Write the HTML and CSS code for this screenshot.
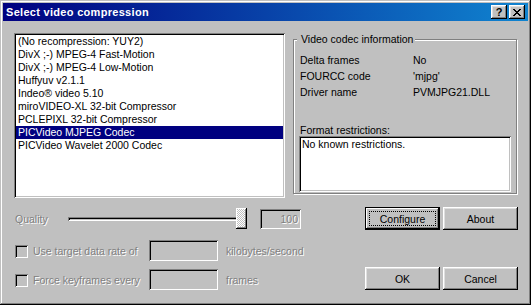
FILE: index.html
```html
<!DOCTYPE html>
<html lang="en">
<head>
    <meta charset="UTF-8">
    <title>Select video compression</title>
    <link rel="stylesheet" href="styles.css">
</head>
<body>
    <div class="window">
        <div class="titlebar">
            <span class="title">Select video compression</span>
            <div class="caption-buttons">
                <button class="caption-btn">?</button>
                <button class="caption-btn">
                    <svg width="8" height="7" viewBox="0 0 8 7" shape-rendering="crispEdges"><path d="M0 0h2v1H0zM6 0h2v1H6zM1 1h2v1H1zM5 1h2v1H5zM2 2h4v1H2zM3 3h2v1H3zM2 4h4v1H2zM1 5h2v1H1zM5 5h2v1H5zM0 6h2v1H0zM6 6h2v1H6z"/></svg>
                </button>
            </div>
        </div>

        <div class="content">
            <div class="top-row">
                <ul class="listbox">
                    <li>(No recompression: YUY2)</li>
                    <li>DivX ;-) MPEG-4 Fast-Motion</li>
                    <li>DivX ;-) MPEG-4 Low-Motion</li>
                    <li>Huffyuv v2.1.1</li>
                    <li>Indeo® video 5.10</li>
                    <li>miroVIDEO-XL 32-bit Compressor</li>
                    <li>PCLEPIXL 32-bit Compressor</li>
                    <li class="selected">PICVideo MJPEG Codec</li>
                    <li>PICVideo Wavelet 2000 Codec</li>
                </ul>

                <div class="groupbox">
                    <span class="legend">Video codec information</span>
                    <div class="info">
                        <div class="info-row"><span class="info-key">Delta frames</span><span>No</span></div>
                        <div class="info-row"><span class="info-key">FOURCC code</span><span>'mjpg'</span></div>
                        <div class="info-row"><span class="info-key">Driver name</span><span>PVMJPG21.DLL</span></div>
                    </div>
                    <div class="restrict-label">Format restrictions:</div>
                    <div class="restrict-box">No known restrictions.</div>
                </div>
            </div>

            <div class="quality-row">
                <div class="quality">
                    <span class="disabled quality-label">Quality</span>
                    <div class="slider">
                        <div class="track"></div>
                        <div class="thumb"></div>
                    </div>
                    <div class="field quality-field disabled">100</div>
                </div>
                <div class="button-pair">
                    <button class="btn default"><span class="focus">Configure</span></button>
                    <button class="btn">About</button>
                </div>
            </div>

            <div class="bottom-row">
                <div class="options">
                    <div class="option">
                        <span class="checkbox"></span>
                        <span class="disabled option-label">Use target data rate of</span>
                        <span class="field option-field"></span>
                        <span class="disabled unit">kilobytes/second</span>
                    </div>
                    <div class="option">
                        <span class="checkbox"></span>
                        <span class="disabled option-label">Force keyframes every</span>
                        <span class="field option-field"></span>
                        <span class="disabled unit">frames</span>
                    </div>
                </div>
                <div class="button-pair">
                    <button class="btn">OK</button>
                    <button class="btn">Cancel</button>
                </div>
            </div>
        </div>
    </div>
</body>
</html>
```

FILE: styles.css
```css
html, body {
    margin: 0;
    padding: 0;
    background: #c0c0c0;
    color: #000;
    font-family: "Liberation Sans", Arial, sans-serif;
    font-size: 10.5px;
}

.window {
    width: 531px;
    height: 305px;
    box-sizing: border-box;
    padding: 3px;
    background: #c0c0c0;
    box-shadow: inset -1px -1px #000, inset 1px 1px #c0c0c0, inset -2px -2px #808080, inset 2px 2px #fff;
}

.titlebar {
    height: 18px;
    display: flex;
    align-items: center;
    justify-content: space-between;
    padding: 0 3px 0 3px;
    background: linear-gradient(to right, #000080, #1084d0);
}

.title {
    color: #fff;
    font-weight: bold;
    font-size: 11px;
    letter-spacing: 0.3px;
}

.caption-buttons {
    display: flex;
    gap: 2px;
}

.caption-btn {
    width: 16px;
    height: 14px;
    padding: 0;
    border: 0;
    background: #c0c0c0;
    display: flex;
    align-items: center;
    justify-content: center;
    font-family: "Liberation Sans", Arial, sans-serif;
    font-weight: bold;
    font-size: 11px;
    box-shadow: inset -1px -1px #000, inset 1px 1px #fff, inset -2px -2px #808080, inset 2px 2px #dfdfdf;
}

.content {
    padding: 12px 10px 0 11px;
}

/* list + codec info */
.top-row {
    display: flex;
    gap: 8px;
}

.listbox {
    width: 271px;
    height: 165px;
    box-sizing: border-box;
    margin: 0;
    padding: 2px;
    list-style: none;
    background: #fff;
    box-shadow: inset 1px 1px #808080, inset -1px -1px #fff, inset 2px 2px #000, inset -2px -2px #c0c0c0;
}

.listbox li {
    height: 13px;
    line-height: 13px;
    padding-left: 2px;
    white-space: nowrap;
}

.listbox li.selected {
    background: #000080;
    color: #fff;
}

.groupbox {
    width: 224px;
    height: 155px;
    box-sizing: border-box;
    margin-top: 6px;
    padding: 0 5px 0 5px;
    border: 1px solid #808080;
    box-shadow: inset 1px 1px #fff, 1px 1px #fff;
}

.legend {
    display: block;
    width: fit-content;
    margin: -7px 0 0 -2px;
    padding: 0 2px 0 4px;
    line-height: 13px;
    background: #c0c0c0;
}

.info {
    margin-top: 6px;
    padding-left: 1px;
}

.info-row {
    display: flex;
    height: 16px;
    line-height: 16px;
}

.info-key {
    width: 113px;
}

.restrict-label {
    margin-top: 24px;
    padding-left: 1px;
    line-height: 12px;
}

.restrict-box {
    width: 212px;
    height: 56px;
    box-sizing: border-box;
    padding: 2px 3px;
    line-height: 12px;
    background: #fff;
    box-shadow: inset 1px 1px #808080, inset -1px -1px #fff, inset 2px 2px #000, inset -2px -2px #c0c0c0;
}

/* shared controls */
.disabled {
    color: #808080;
    text-shadow: 1px 1px 0 #fff;
}

.field {
    box-sizing: border-box;
    background: #c0c0c0;
    box-shadow: inset 1px 1px #808080, inset -1px -1px #fff, inset 2px 2px #000, inset -2px -2px #c0c0c0;
}

.btn {
    width: 75px;
    height: 23px;
    padding: 0;
    border: 0;
    background: #c0c0c0;
    font-family: "Liberation Sans", Arial, sans-serif;
    font-size: 10.5px;
    color: #000;
    box-shadow: inset -1px -1px #000, inset 1px 1px #fff, inset -2px -2px #808080, inset 2px 2px #dfdfdf;
}

.btn.default {
    display: flex;
    padding: 4px;
    box-shadow: inset 0 0 0 1px #000, inset -2px -2px #000, inset 2px 2px #fff, inset -3px -3px #808080;
}

.focus {
    flex: 1;
    display: flex;
    align-items: center;
    justify-content: center;
    border: 1px dotted #000;
}

.button-pair {
    display: flex;
    gap: 3px;
}

/* quality slider row */
.quality-row {
    margin-top: 9px;
    display: flex;
    align-items: center;
    justify-content: space-between;
}

.quality {
    display: flex;
    align-items: center;
}

.quality-label {
    width: 53px;
    padding-left: 1px;
}

.slider {
    width: 179px;
    height: 21px;
    display: flex;
    align-items: center;
}

.track {
    flex: 1;
    height: 4px;
    margin-right: -6px;
    background: #c0c0c0;
    box-shadow: inset 1px 1px #808080, inset -1px -1px #fff, inset 2px 2px #000;
}

.thumb {
    width: 11px;
    height: 21px;
    background: repeating-conic-gradient(#fff 0 25%, #c0c0c0 0 50%) 0 0 / 2px 2px;
    box-shadow: inset -1px -1px #000, inset 1px 1px #fff, inset -2px -2px #808080;
}

.quality-field {
    width: 41px;
    height: 20px;
    margin-left: 13px;
    padding-right: 3px;
    line-height: 20px;
    text-align: right;
}

/* options + ok/cancel */
.bottom-row {
    margin-top: 10px;
    display: flex;
    align-items: flex-end;
    justify-content: space-between;
}

.options {
    display: flex;
    flex-direction: column;
    gap: 8px;
}

.option {
    display: flex;
    align-items: center;
    height: 21px;
}

.checkbox {
    width: 13px;
    height: 13px;
    margin: 1px 0 0 1px;
    box-sizing: border-box;
    background: #c0c0c0;
    box-shadow: inset 1px 1px #808080, inset -1px -1px #fff, inset 2px 2px #000, inset -2px -2px #c0c0c0;
}

.option-label {
    width: 116px;
    margin-left: 5px;
}

.option-field {
    width: 69px;
    height: 21px;
}

.unit {
    margin-left: 8px;
}
```
